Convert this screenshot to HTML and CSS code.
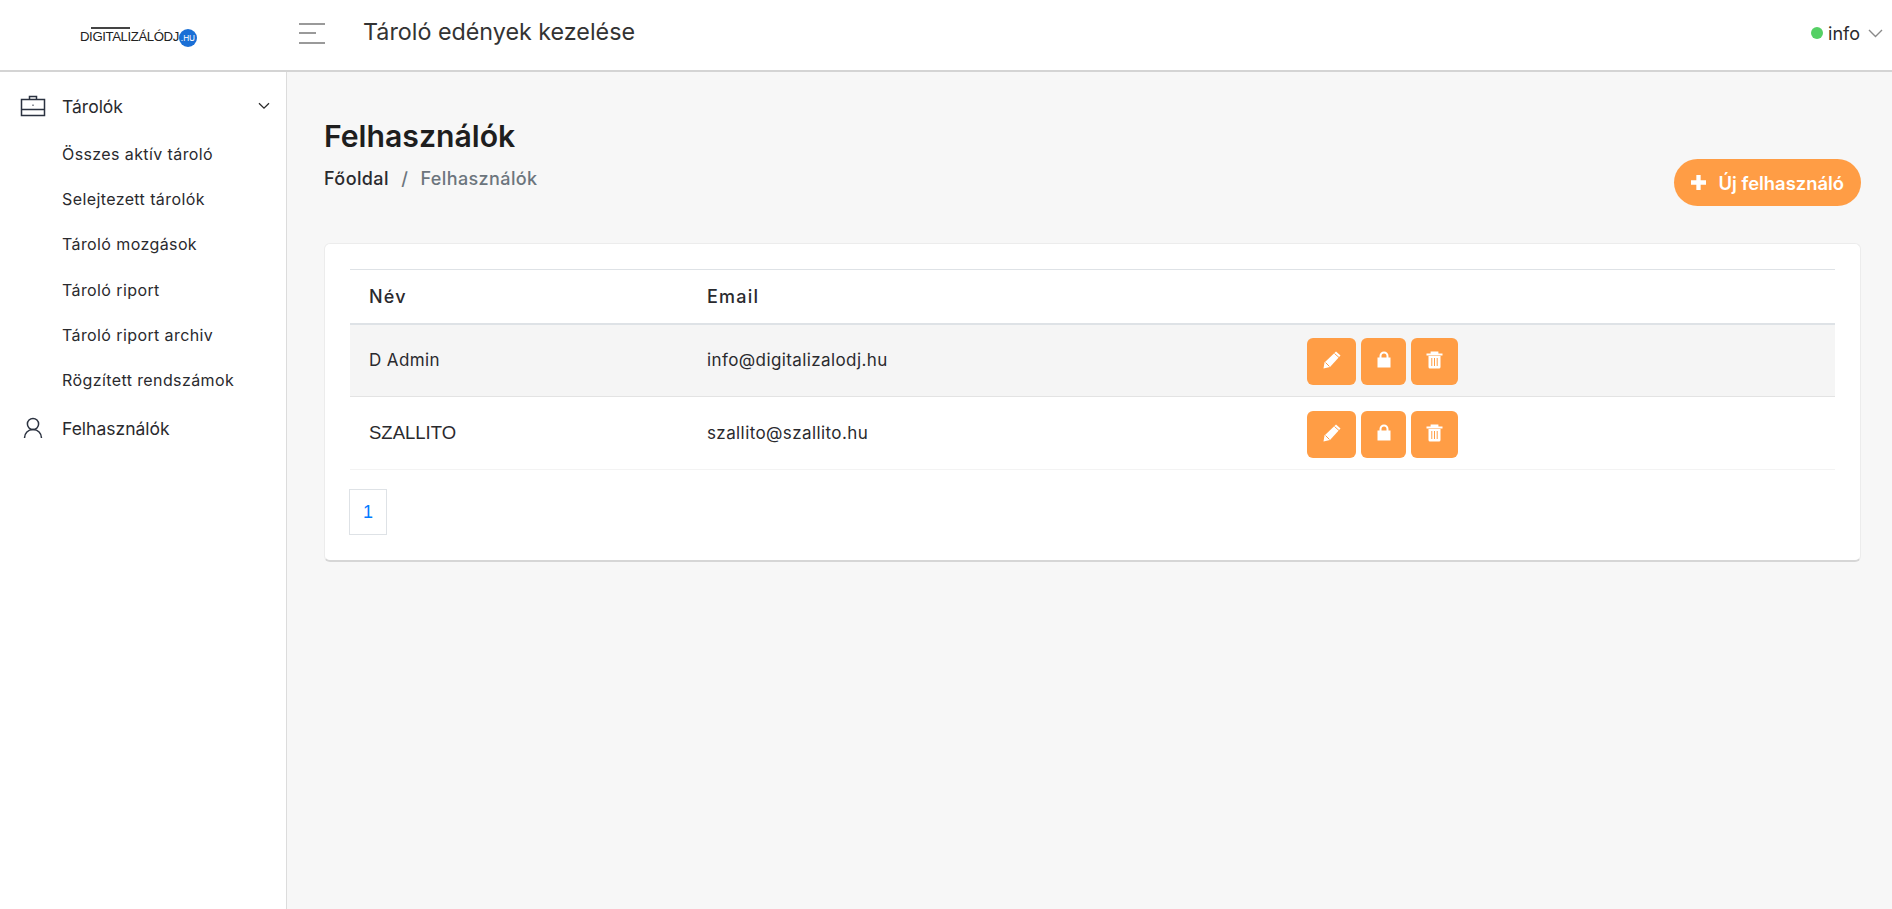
FILE: index.html
```html
<!DOCTYPE html>
<html lang="en">
<head>
    <meta charset="UTF-8">
    <meta name="viewport" content="width=device-width, initial-scale=1.0">
    <title>Tároló edények kezelése</title>
    <link rel="stylesheet" href="styles.css">
</head>
<body>
    <header class="topbar">
        <div class="logo-box">
            <div class="logo">
                <span class="logo-line"></span>
                <span class="logo-text">DIGITALIZÁLÓDJ</span>
                <span class="logo-badge">.HU</span>
            </div>
        </div>
        <button class="burger" aria-label="Menü">
            <span class="burger-long"></span>
            <span class="burger-short"></span>
            <span class="burger-long"></span>
        </button>
        <div class="page-title">Tároló edények kezelése</div>
        <div class="user-menu">
            <span class="status-dot"></span>
            <span class="user-name">info</span>
            <svg class="user-caret" width="15" height="9" viewBox="0 0 15 9"><path d="M1 1l6.500 6.500L14 1" fill="none" stroke="#8a8a8a" stroke-width="1.400"/></svg>
        </div>
    </header>

    <div class="layout">
        <nav class="sidebar">
            <div class="nav-item">
                <svg class="nav-icon" width="26" height="22" viewBox="0 0 26 22"><path d="M1.500 4.500h23v16h-23zM1.500 14.500h23M9.500 4.500V1.500h7v3" fill="none" stroke="#2b3240" stroke-width="1.500"/><path d="M13 9.500v1.500" stroke="#2b3240" stroke-width="1"/></svg>
                <span class="nav-label">Tárolók</span>
                <svg class="nav-caret" width="12" height="8" viewBox="0 0 12 8"><path d="M1 1.200l5 5 5-5" fill="none" stroke="#2b2b2b" stroke-width="1.300"/></svg>
            </div>
            <a class="sub-item">Összes aktív tároló</a>
            <a class="sub-item">Selejtezett tárolók</a>
            <a class="sub-item">Tároló mozgások</a>
            <a class="sub-item">Tároló riport</a>
            <a class="sub-item">Tároló riport archiv</a>
            <a class="sub-item">Rögzített rendszámok</a>
            <div class="nav-item nav-item-user">
                <svg class="nav-icon" width="26" height="22" viewBox="0 0 26 22"><circle cx="13" cy="7" r="5.600" fill="none" stroke="#2b3240" stroke-width="1.500"/><path d="M4.500 21c0-5 3.500-8.400 8.500-8.400s8.500 3.400 8.500 8.400" fill="none" stroke="#2b3240" stroke-width="1.500"/></svg>
                <span class="nav-label">Felhasználók</span>
            </div>
        </nav>

        <main class="content">
            <div class="page-head">
                <div>
                    <h1 class="page-heading">Felhasználók</h1>
                    <div class="breadcrumb">
                        <span>Főoldal</span>
                        <span class="crumb-sep">/</span>
                        <span class="crumb-current">Felhasználók</span>
                    </div>
                </div>
                <button class="add-btn">
                    <svg width="15" height="15" viewBox="0 0 16 16"><path d="M8 0v16M0 8h16" stroke="#fff" stroke-width="4.600"/></svg>
                    Új felhasználó
                </button>
            </div>

            <section class="card">
                <table class="user-table">
                    <thead>
                        <tr>
                            <th class="col-name">Név</th>
                            <th class="col-email">Email</th>
                            <th></th>
                        </tr>
                    </thead>
                    <tbody>
                        <tr class="row-odd">
                            <td>D Admin</td>
                            <td>info@digitalizalodj.hu</td>
                            <td>
                                <div class="actions">
                                    <button class="icon-btn btn-edit"><svg width="18" height="18" viewBox="0 0 18 18"><path d="M13 0.500l4.500 4L7 16l-6.500 1.500 1-6z" fill="#fff"/><path d="M11.500 2.500l4.500 4M2.500 11.500l4 4" stroke="#ff9d45" stroke-width="1"/></svg></button>
                                    <button class="icon-btn btn-lock"><svg width="14" height="17" viewBox="0 0 14 17"><path d="M3.500 7V5a3.500 3.500 0 0 1 7 0v2" fill="none" stroke="#fff" stroke-width="2"/><rect x="0.500" y="6.500" width="13" height="10" fill="#fff"/></svg></button>
                                    <button class="icon-btn btn-trash"><svg width="17" height="18" viewBox="0 0 17 18"><path d="M0.500 3.500h16M5.500 3.500V1.500h6v2" fill="none" stroke="#fff" stroke-width="1.800"/><path d="M2.500 5h12v11a1.500 1.500 0 0 1-1.500 1.500H4A1.500 1.500 0 0 1 2.500 16z" fill="#fff"/><path d="M5.800 7v8M8.500 7v8M11.200 7v8" stroke="#ff9d45" stroke-width="1"/></svg></button>
                                </div>
                            </td>
                        </tr>
                        <tr>
                            <td class="cell-plain">SZALLITO</td>
                            <td>szallito@szallito.hu</td>
                            <td>
                                <div class="actions">
                                    <button class="icon-btn btn-edit"><svg width="18" height="18" viewBox="0 0 18 18"><path d="M13 0.500l4.500 4L7 16l-6.500 1.500 1-6z" fill="#fff"/><path d="M11.500 2.500l4.500 4M2.500 11.500l4 4" stroke="#ff9d45" stroke-width="1"/></svg></button>
                                    <button class="icon-btn btn-lock"><svg width="14" height="17" viewBox="0 0 14 17"><path d="M3.500 7V5a3.500 3.500 0 0 1 7 0v2" fill="none" stroke="#fff" stroke-width="2"/><rect x="0.500" y="6.500" width="13" height="10" fill="#fff"/></svg></button>
                                    <button class="icon-btn btn-trash"><svg width="17" height="18" viewBox="0 0 17 18"><path d="M0.500 3.500h16M5.500 3.500V1.500h6v2" fill="none" stroke="#fff" stroke-width="1.800"/><path d="M2.500 5h12v11a1.500 1.500 0 0 1-1.500 1.500H4A1.500 1.500 0 0 1 2.500 16z" fill="#fff"/><path d="M5.800 7v8M8.500 7v8M11.200 7v8" stroke="#ff9d45" stroke-width="1"/></svg></button>
                                </div>
                            </td>
                        </tr>
                    </tbody>
                </table>
                <div class="pagination"><a class="page-link">1</a></div>
            </section>
        </main>
    </div>
</body>
</html>
```
FILE: styles.css
```css
* {
    box-sizing: border-box;
}
body {
    margin: 0;
    height: 100vh;
    overflow: hidden;
    font-family: Inter, "Open Sans", sans-serif;
    color: #2a2a2e;
    background: #f7f7f7;
}
button {
    font-family: inherit;
    border: 0;
    padding: 0;
    cursor: pointer;
}

/* top bar */
.topbar {
    height: 72px;
    display: flex;
    align-items: center;
    background: #fff;
    border-bottom: 2px solid #d4d4d4;
}
.logo-box {
    width: 299px;
    padding-left: 80px;
    flex-shrink: 0;
}
.logo {
    position: relative;
    display: flex;
    align-items: center;
    height: 20px;
    margin-top: 3px;
}
.logo-text {
    font-family: "Liberation Sans", sans-serif;
    font-size: 13.200px;
    letter-spacing: -0.4px;
    color: #222;
    white-space: nowrap;
}
.logo-line {
    position: absolute;
    left: 11px;
    top: 0;
    width: 39px;
    height: 2px;
    background: #444;
}
.logo-badge {
    width: 18px;
    height: 18px;
    margin-top: 2px;
    border-radius: 50%;
    background: #1a6fd6;
    color: #fff;
    font-size: 8px;
    line-height: 18px;
    text-align: center;
    flex-shrink: 0;
}
.burger {
    width: 26px;
    height: 21px;
    margin-top: -4px;
    display: flex;
    flex-direction: column;
    justify-content: space-between;
    align-items: flex-start;
    background: none;
    margin-right: 38px;
}
.burger span {
    display: block;
    height: 2px;
    background: #9a9a9a;
}
.burger-long {
    width: 26px;
}
.burger-short {
    width: 17px;
}
.page-title {
    font-size: 23.300px;
    color: #333;
    margin-top: -8px;
}
.user-menu {
    margin-left: auto;
    margin-right: 9px;
    margin-top: -4px;
    display: flex;
    align-items: center;
    font-size: 18px;
}
.status-dot {
    width: 12px;
    height: 12px;
    border-radius: 50%;
    background: #55d065;
    margin-right: 5px;
}
.user-caret {
    margin-left: 8px;
}

/* sidebar */
.layout {
    display: flex;
    height: calc(100vh - 72px);
}
.sidebar {
    width: 287px;
    flex-shrink: 0;
    background: #fff;
    border-right: 1px solid #dcdcdc;
    padding-top: 16px;
}
.nav-item {
    display: flex;
    align-items: center;
    height: 36px;
    padding-left: 20px;
}
.nav-item-user {
    margin-top: 7px;
}
.nav-icon {
    flex-shrink: 0;
}
.nav-label {
    font-size: 17.500px;
    margin-left: 16px;
}
.nav-caret {
    margin-left: auto;
    margin-right: 16px;
}
.sub-item {
    display: block;
    font-size: 16px;
    letter-spacing: 0.4px;
    line-height: 45.200px;
    padding-left: 62px;
    color: #2a2a2e;
}
.sub-item:first-of-type {
    margin-top: 8px;
}

/* content */
.content {
    flex: 1;
    padding: 21px 31px 0 37px;
}
.page-head {
    display: flex;
    justify-content: space-between;
    align-items: flex-end;
    height: 150px;
}
.page-heading {
    margin: 0;
    font-size: 30.200px;
    line-height: 40px;
    font-weight: 600;
    color: #1e1e1e;
}
.breadcrumb {
    font-size: 18px;
    font-weight: 500;
    letter-spacing: 0.4px;
    margin-top: 10px;
    line-height: 26px;
    margin-bottom: 51px;
}
.crumb-sep {
    color: #6c757d;
    margin: 0 7px;
}
.crumb-current {
    color: #6c757d;
}
.add-btn {
    height: 47px;
    margin-bottom: 37px;
    padding: 0 17px;
    border-radius: 24px;
    background: #ff9d45;
    color: #fff;
    font-size: 18.400px;
    font-weight: 600;
    display: flex;
    align-items: center;
    gap: 12px;
}

/* card + table */
.card {
    background: #fff;
    border-radius: 6px;
    padding: 25px 25px 25px;
    border: 1px solid #ececec;
    border-bottom: 2px solid #d6d6d6;
}
.user-table {
    width: 100%;
    border-collapse: collapse;
    font-size: 17px;
    letter-spacing: 0.4px;
}
.user-table th {
    text-align: left;
    font-size: 18px;
    font-weight: 500;
    letter-spacing: 1.200px;
    height: 54px;
    padding: 0 19px;
    border-top: 1px solid #dee2e6;
    border-bottom: 2px solid #dee2e6;
}
.user-table td {
    height: 73px;
    padding: 0 19px;
    border-bottom: 1px solid #e3e3e3;
}
.user-table tbody tr:last-child td {
    border-bottom-color: #f3f3f3;
}
.user-table .cell-plain {
    font-family: "Liberation Sans", sans-serif;
    font-size: 18.500px;
    letter-spacing: 0;
}
.row-odd {
    background: #f5f5f5;
}
.col-name {
    width: 338px;
}
.col-email {
    width: 600px;
}
.actions {
    display: flex;
    gap: 5px;
    margin-top: 2px;
}
.icon-btn {
    height: 47px;
    border-radius: 6px;
    background: #ff9d45;
    display: flex;
    align-items: center;
    justify-content: center;
}
.icon-btn svg {
    margin-bottom: 3px;
}
.btn-edit {
    width: 49px;
}
.btn-lock {
    width: 45px;
}
.btn-trash {
    width: 47px;
}
.pagination {
    display: flex;
    margin-top: 19px;
}
.page-link {
    width: 38px;
    height: 46px;
    border: 1px solid #dee2e6;
    margin-left: -1px;
    color: #007bff;
    font-family: "Liberation Sans", sans-serif;
    font-size: 18px;
    display: flex;
    align-items: center;
    justify-content: center;
}
```
